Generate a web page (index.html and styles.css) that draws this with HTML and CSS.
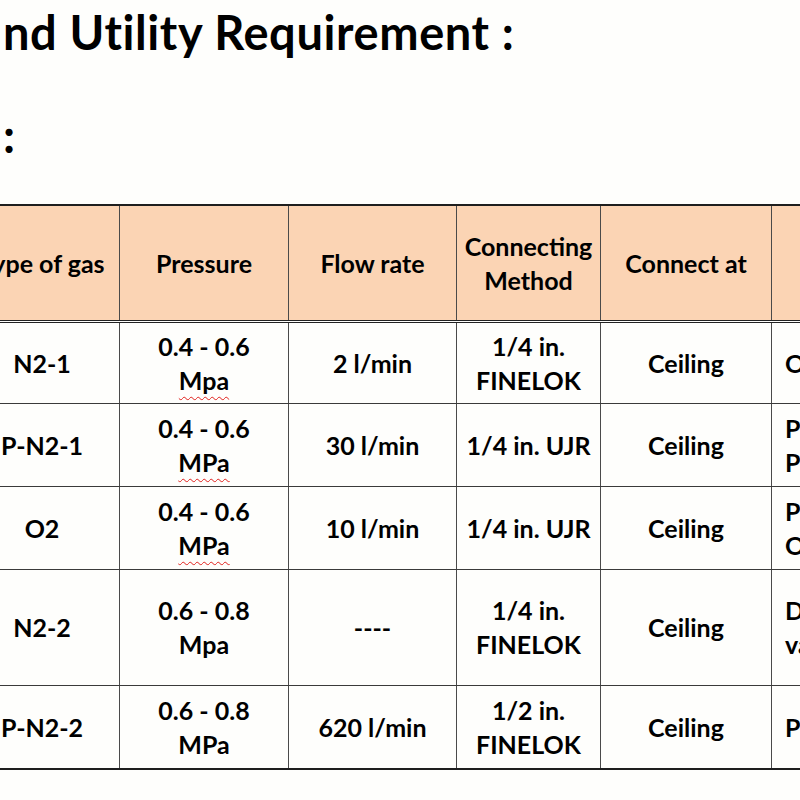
FILE: index.html
```html
<!DOCTYPE html>
<html>
<head>
<meta charset="utf-8">
<link rel="stylesheet" href="styles.css">
</head>
<body>
<div class="slide">
  <h1 class="title">nd Utility Requirement :</h1>
  <h2 class="subtitle">:</h2>
  <table class="gas-table">
    <colgroup>
      <col class="c1"><col class="c2"><col class="c3"><col class="c4"><col class="c5"><col class="c6">
    </colgroup>
    <thead>
      <tr class="head-row">
        <th>Type of gas</th>
        <th>Pressure</th>
        <th>Flow rate</th>
        <th>Connecting Method</th>
        <th>Connect at</th>
        <th class="note"></th>
      </tr>
    </thead>
    <tbody>
      <tr class="r1">
        <td>N2-1</td>
        <td>0.4 - 0.6<br><span class="spell">Mpa</span></td>
        <td>2 l/min</td>
        <td>1/4 in.<br>FINELOK</td>
        <td>Ceiling</td>
        <td class="note">Open</td>
      </tr>
      <tr class="r2">
        <td>P-N2-1</td>
        <td>0.4 - 0.6<br><span class="spell">MPa</span></td>
        <td>30 l/min</td>
        <td>1/4 in. UJR</td>
        <td>Ceiling</td>
        <td class="note">P<br>P</td>
      </tr>
      <tr class="r3">
        <td>O2</td>
        <td>0.4 - 0.6<br><span class="spell">MPa</span></td>
        <td>10 l/min</td>
        <td>1/4 in. UJR</td>
        <td>Ceiling</td>
        <td class="note">P<br>O</td>
      </tr>
      <tr class="r4">
        <td>N2-2</td>
        <td>0.6 - 0.8<br>Mpa</td>
        <td>----</td>
        <td>1/4 in.<br>FINELOK</td>
        <td>Ceiling</td>
        <td class="note">D<br>va</td>
      </tr>
      <tr class="r5">
        <td>P-N2-2</td>
        <td>0.6 - 0.8<br>MPa</td>
        <td>620 l/min</td>
        <td>1/2 in.<br>FINELOK</td>
        <td>Ceiling</td>
        <td class="note">P</td>
      </tr>
    </tbody>
  </table>
</div>
</body>
</html>
```

FILE: styles.css
```css
html, body {
  margin: 0;
  padding: 0;
  background: #fefefc;
}
body {
  width: 800px;
  height: 800px;
  overflow: hidden;
  font-family: Lato, "Liberation Sans", sans-serif;
  color: #000;
}
.slide {
  padding-top: 4px;
}
.title {
  margin: 0 0 0 3px;
  font-size: 47px;
  letter-spacing: 0.6px;
  line-height: 56px;
  font-weight: 700;
  white-space: nowrap;
}
.subtitle {
  margin: 47px 0 0 3px;
  font-size: 47px;
  line-height: 56px;
  font-weight: 700;
}
.gas-table {
  margin-top: 41px;
  margin-left: -36px;
  border-collapse: collapse;
  table-layout: fixed;
  width: 1007px;
  font-size: 25px;
  line-height: 34px;
  font-weight: 700;
}
.c1 { width: 155px; }
.c2 { width: 169px; }
.c3 { width: 168px; }
.c4 { width: 144px; }
.c5 { width: 171px; }
.c6 { width: 200px; }
.gas-table th,
.gas-table td {
  border-left: 1.5px solid #4a4a4a;
  border-right: 1.5px solid #4a4a4a;
  border-top: 1px solid #3a3a3a;
  border-bottom: 1px solid #3a3a3a;
  text-align: center;
  vertical-align: middle;
  padding: 0;
  white-space: nowrap;
}
.gas-table th {
  background: #fbd4b4;
  font-weight: 700;
  white-space: normal;
  border-top: 2px solid #1e1e1e;
  border-bottom: 3px double #222;
}
.gas-table .note {
  text-align: left;
  padding-left: 13px;
}
.head-row { height: 116px; }
.r1 { height: 82px; }
.r2 { height: 83px; }
.r3 { height: 83px; }
.r4 { height: 116px; }
.r5 { height: 84px; }
.r5 td { border-bottom: 2px solid #1e1e1e; }
.spell {
  text-decoration: underline wavy #e0201c;
  text-decoration-thickness: 1px;
  text-underline-offset: 6px;
}
```
